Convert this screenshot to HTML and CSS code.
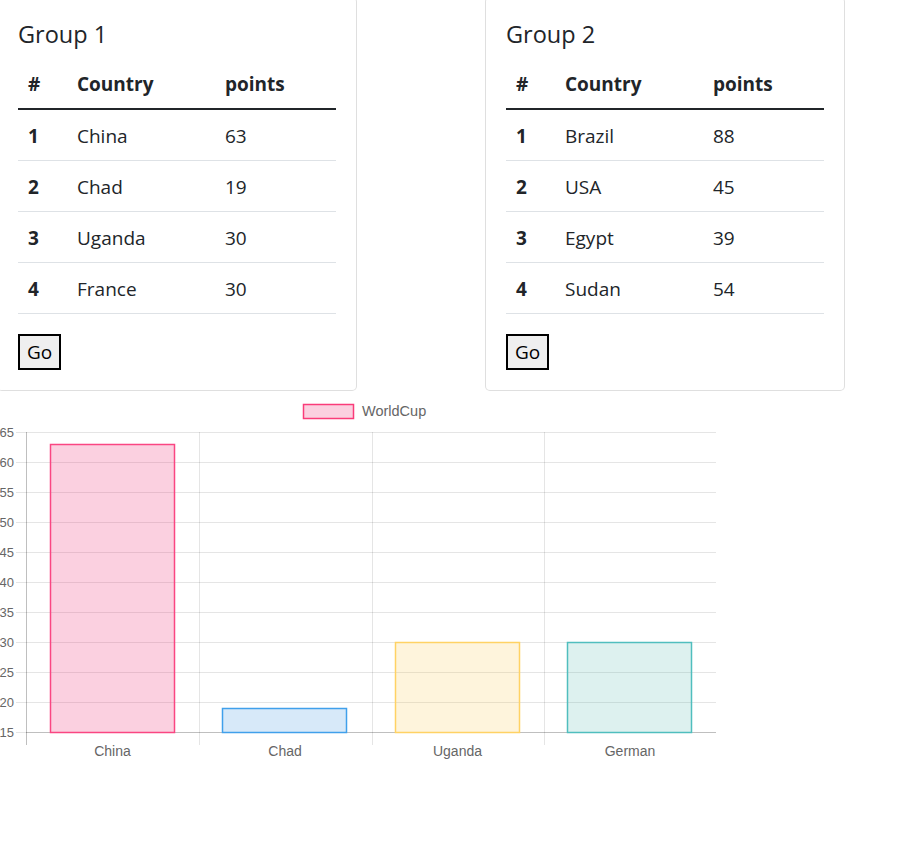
FILE: index.html
```html
<!DOCTYPE html>
<html>
<head>
<meta charset="utf-8">
<title>Groups</title>
<link rel="stylesheet" href="styles.css">
</head>
<body>
<div class="groups">
  <div class="card">
    <h5 class="card-title">Group 1</h5>
    <table class="table">
      <colgroup><col class="c1"><col class="c2"><col class="c3"></colgroup>
      <thead><tr><th>#</th><th>Country</th><th>points</th></tr></thead>
      <tbody>
        <tr><th>1</th><td>China</td><td>63</td></tr>
        <tr><th>2</th><td>Chad</td><td>19</td></tr>
        <tr><th>3</th><td>Uganda</td><td>30</td></tr>
        <tr><th>4</th><td>France</td><td>30</td></tr>
      </tbody>
    </table>
    <button class="go">Go</button>
  </div>
  <div class="card">
    <h5 class="card-title">Group 2</h5>
    <table class="table">
      <colgroup><col class="c1"><col class="c2"><col class="c3"></colgroup>
      <thead><tr><th>#</th><th>Country</th><th>points</th></tr></thead>
      <tbody>
        <tr><th>1</th><td>Brazil</td><td>88</td></tr>
        <tr><th>2</th><td>USA</td><td>45</td></tr>
        <tr><th>3</th><td>Egypt</td><td>39</td></tr>
        <tr><th>4</th><td>Sudan</td><td>54</td></tr>
      </tbody>
    </table>
    <button class="go">Go</button>
  </div>
</div>
<svg class="chart" width="902" height="470" viewBox="0 395 902 470" xmlns="http://www.w3.org/2000/svg">
  <g class="legend">
    <rect x="303.5" y="404.5" width="50" height="14" fill="#fbd0e0" stroke="rgb(250,60,122)" stroke-width="1.5"/>
    <text x="362" y="416">WorldCup</text>
  </g>
  <g stroke="rgba(0,0,0,0.1)" stroke-width="1">
    <line x1="16" y1="432.5" x2="716" y2="432.5"/>
    <line x1="16" y1="462.5" x2="716" y2="462.5"/>
    <line x1="16" y1="492.5" x2="716" y2="492.5"/>
    <line x1="16" y1="522.5" x2="716" y2="522.5"/>
    <line x1="16" y1="552.5" x2="716" y2="552.5"/>
    <line x1="16" y1="582.5" x2="716" y2="582.5"/>
    <line x1="16" y1="612.5" x2="716" y2="612.5"/>
    <line x1="16" y1="642.5" x2="716" y2="642.5"/>
    <line x1="16" y1="672.5" x2="716" y2="672.5"/>
    <line x1="16" y1="702.5" x2="716" y2="702.5"/>
    <line x1="16" y1="732.5" x2="26" y2="732.5"/>
    <line x1="199.5" y1="432" x2="199.5" y2="745"/>
    <line x1="372.5" y1="432" x2="372.5" y2="745"/>
    <line x1="544.5" y1="432" x2="544.5" y2="745"/>
  </g>
  <g stroke="rgba(0,0,0,0.25)" stroke-width="1">
    <line x1="26" y1="732.5" x2="716" y2="732.5"/>
    <line x1="26.5" y1="432" x2="26.5" y2="745"/>
  </g>
  <g stroke-width="1.5">
    <rect x="50.5" y="444.5" width="124" height="288" fill="rgba(240,60,125,0.24)" stroke="rgb(250,70,130)"/>
    <rect x="222.5" y="708.5" width="124" height="24" fill="rgba(54,145,225,0.2)" stroke="rgb(64,160,235)"/>
    <rect x="395.5" y="642.5" width="124" height="90" fill="rgba(250,200,80,0.2)" stroke="rgb(255,210,100)"/>
    <rect x="567.5" y="642.5" width="124" height="90" fill="rgba(75,180,170,0.19)" stroke="rgb(80,190,190)"/>
  </g>
  <g class="ylabels" text-anchor="end">
    <text x="14" y="437">65</text>
    <text x="14" y="467">60</text>
    <text x="14" y="497">55</text>
    <text x="14" y="527">50</text>
    <text x="14" y="557">45</text>
    <text x="14" y="587">40</text>
    <text x="14" y="617">35</text>
    <text x="14" y="647">30</text>
    <text x="14" y="677">25</text>
    <text x="14" y="707">20</text>
    <text x="14" y="737">15</text>
  </g>
  <g class="xlabels" text-anchor="middle">
    <text x="112.5" y="756">China</text>
    <text x="285" y="756">Chad</text>
    <text x="457.5" y="756">Uganda</text>
    <text x="630" y="756">German</text>
  </g>
</svg>
</body>
</html>
```

FILE: styles.css
```css
html, body {
  margin: 0;
  padding: 0;
  background: #fff;
}

body {
  font-family: "Open Sans", "Noto Sans", sans-serif;
  font-size: 19px;
  color: #212529;
  overflow: hidden;
}

.groups {
  display: flex;
  gap: 128px;
  margin-top: -3px;
  margin-left: -3px;
}

.card {
  box-sizing: border-box;
  width: 360px;
  padding: 20px;
  border: 1px solid rgba(0, 0, 0, 0.125);
  border-radius: 5px;
  background: #fff;
}

.card-title {
  margin: 0 0 7px;
  font-size: 23.5px;
  font-weight: 400;
  line-height: 32px;
}

.table {
  width: 318px;
  border-collapse: collapse;
  table-layout: fixed;
  margin-bottom: 20px;
}

.c1 { width: 49px; }
.c2 { width: 148px; }
.c3 { width: 121px; }

.table th,
.table td {
  text-align: left;
  line-height: 26px;
  padding: 13px 10px 11px;
}

.table th {
  font-weight: 700;
}

.table thead th {
  padding: 14px 10px 11px;
  border-bottom: 2px solid #212529;
}

.table tbody tr {
  border-bottom: 1px solid #dee2e6;
}

.go {
  display: block;
  font-family: "Open Sans", "Noto Sans", sans-serif;
  font-size: 19px;
  line-height: 26px;
  padding: 3px 7px;
  color: #000;
  background: #efefef;
  border: 2px solid #000;
  border-radius: 0;
}

.chart {
  display: block;
  margin-top: 4px;
  font-family: "Liberation Sans", Arial, sans-serif;
  font-size: 14px;
}

.chart text {
  fill: #666;
}

.legend text {
  font-size: 14.5px;
}

.ylabels text {
  font-size: 13px;
}
```
